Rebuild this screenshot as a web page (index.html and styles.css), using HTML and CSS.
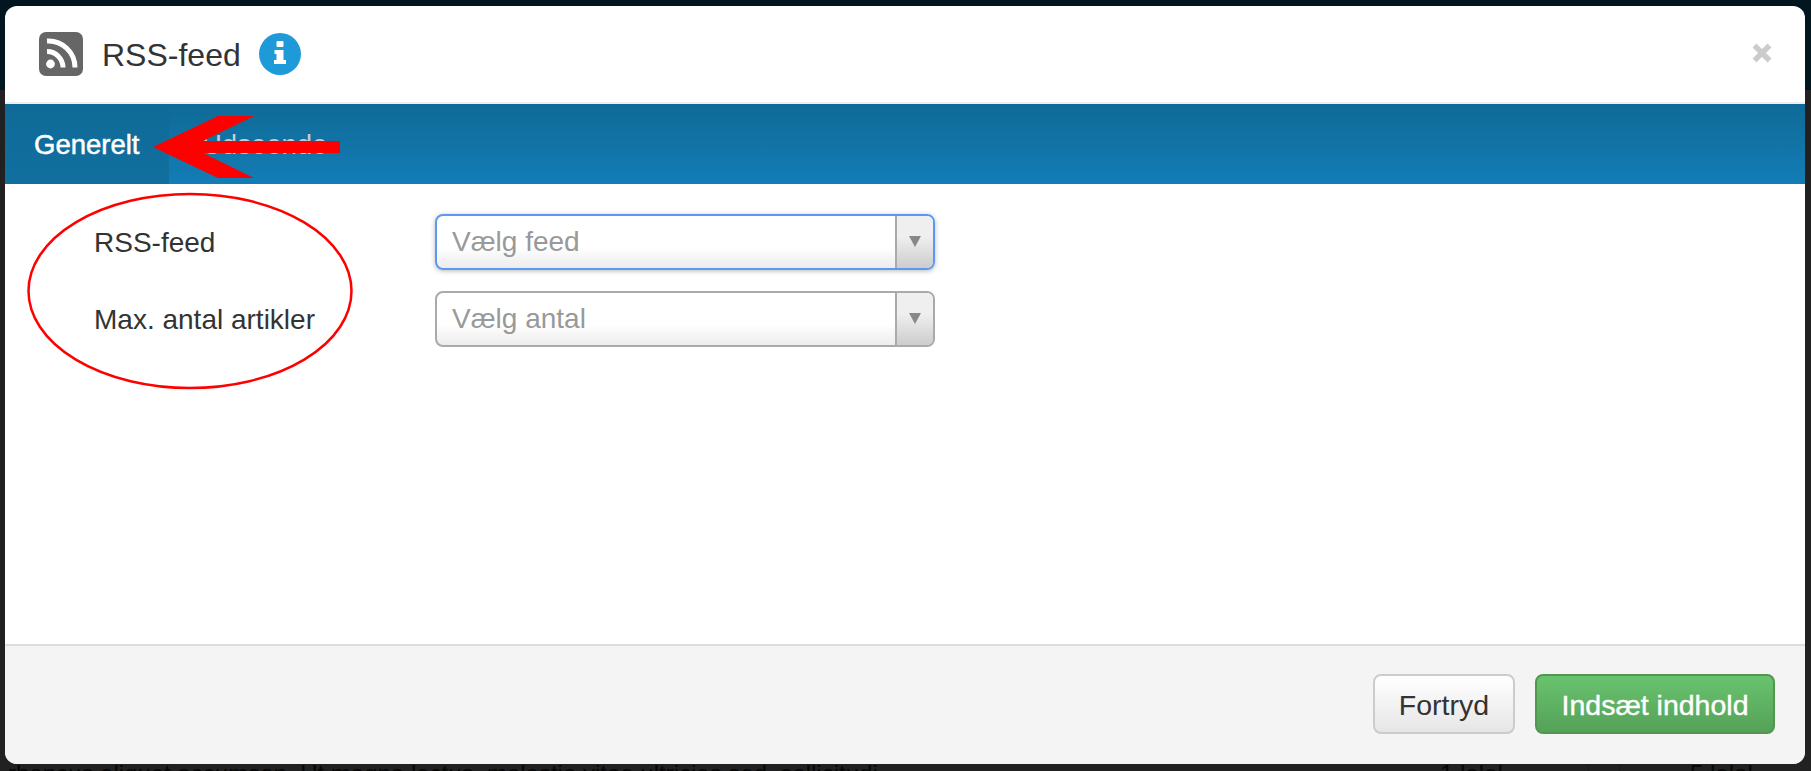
FILE: index.html
```html
<!DOCTYPE html>
<html lang="da">
<head>
<meta charset="utf-8">
<title>RSS-feed</title>
<link rel="stylesheet" href="styles.css">
</head>
<body>
<div class="page">
  <div class="page-nav"></div>
  <div class="page-main">
    <div class="page-row">
      <p class="page-text">rhoncus aliquet accumsan. Ut magna lectus, molestie vitae ultricies sed, sollicitudi</p>
      <span class="page-col">1 lolol</span>
      <span class="page-col page-col-narrow"></span>
      <span class="page-col page-col-last">5 lolol</span>
    </div>
  </div>
</div>

<div class="modal">
  <header class="modal-header">
    <svg class="rss-icon" viewBox="0 0 44 44" aria-hidden="true">
      <rect width="44" height="44" rx="7" fill="#666"/>
      <circle cx="11.5" cy="32" r="4.4" fill="#fff"/>
      <path d="M8 19.5a16 16 0 0 1 16 16" fill="none" stroke="#fff" stroke-width="5"/>
      <path d="M8 9a26.500 26.500 0 0 1 28 26.500" fill="none" stroke="#fff" stroke-width="5"/>
    </svg>
    <h1 class="modal-title">RSS-feed</h1>
    <svg class="info-icon" viewBox="0 0 42 42" aria-hidden="true">
      <circle cx="21" cy="21" r="21" fill="#1e9ad9"/>
      <rect x="17.500" y="8" width="7" height="6" rx="1" fill="#fff"/>
      <path d="M15.500 17h9v10h2.500v4h-12v-4h2.500v-6h-2z" fill="#fff"/>
    </svg>
    <button class="close" aria-label="Luk">
      <svg viewBox="0 0 20 20" aria-hidden="true"><path d="M2.500 2.500l15 15M17.500 2.500l-15 15" stroke="#ccc" stroke-width="5.500" fill="none"/></svg>
    </button>
  </header>

  <nav class="tabs">
    <a class="tab tab-active">Generelt</a>
    <a class="tab">Udseende</a>
  </nav>

  <form class="modal-body">
    <label class="field-label">RSS-feed</label>
    <div class="select select-focus">
      <span class="select-value">Vælg feed</span>
      <span class="select-arrow"><i class="caret"></i></span>
    </div>
    <label class="field-label">Max. antal artikler</label>
    <div class="select">
      <span class="select-value">Vælg antal</span>
      <span class="select-arrow"><i class="caret"></i></span>
    </div>
  </form>

  <footer class="modal-footer">
    <button class="btn btn-default">Fortryd</button>
    <button class="btn btn-success">Indsæt indhold</button>
  </footer>
</div>

<svg class="annotations" viewBox="0 0 1811 771" aria-hidden="true">
  <polygon points="153,147 218,116 254,116 203,141 340,141 340,153 203,153 254,178 218,178" fill="#ff0000"/>
  <ellipse cx="190" cy="291" rx="161.500" ry="97" fill="none" stroke="#ff0000" stroke-width="2.500"/>
</svg>
</body>
</html>
```
FILE: styles.css
```css
* { box-sizing: border-box; }

html, body {
  margin: 0;
  height: 100%;
  overflow: hidden;
}

body {
  position: relative;
  background: #222;
  font-family: "Liberation Sans", Arial, sans-serif;
  font-size: 28px;
  color: #333;
}

/* Page dimmed behind the dialog */
.page {
  height: 771px;
  display: flex;
  flex-direction: column;
  overflow: hidden;
}

.page-nav {
  height: 90px;
  flex: none;
  background: #02161f;
}

.page-main {
  flex: 1;
  display: flex;
  flex-direction: column;
  justify-content: flex-end;
  background: #212121;
  color: #070707;
}

.page-row {
  display: grid;
  grid-template-columns: 1440px 148px 32px 1fr;
  height: 30px;
  margin-bottom: -18px;
  font-size: 24px;
  line-height: 30px;
  white-space: nowrap;
}

.page-text {
  margin: 0;
  padding-left: 8px;
}

.page-col-narrow {
  border-left: 1px solid #1a1a1a;
  border-right: 1px solid #1a1a1a;
}

.page-col-last {
  padding-left: 70px;
}

/* Dialog */
.modal {
  position: absolute;
  left: 5px;
  top: 6px;
  width: 1800px;
  height: 758px;
  display: flex;
  flex-direction: column;
  background: #fff;
  border-radius: 12px;
  overflow: hidden;
}

.modal-header {
  height: 98px;
  flex: none;
  display: flex;
  align-items: center;
  padding: 0 24px 0 34px;
  border-bottom: 2px solid #eee;
}

.rss-icon {
  width: 44px;
  height: 44px;
  flex: none;
}

.modal-title {
  margin: 2px 0 0 19px;
  font-size: 32px;
  font-weight: normal;
  line-height: 40px;
  color: #333;
}

.info-icon {
  width: 42px;
  height: 42px;
  flex: none;
  margin: 0 0 0 18px;
}

.close {
  margin: -2px 9px 0 auto;
  padding: 0;
  width: 20px;
  height: 20px;
  border: 0;
  background: none;
}

.close svg {
  display: block;
  width: 20px;
  height: 20px;
}

.tabs {
  height: 80px;
  flex: none;
  display: flex;
  background: linear-gradient(#0f6a97, #137db6);
  font-size: 27.500px;
}

.tab {
  display: flex;
  align-items: center;
  padding: 2px 30px 0 33px;
  color: #ccc;
}

.tab-active {
  width: 164px;
  padding: 2px 0 0 29px;
  background: linear-gradient(#0f6a97, #116f9f);
  color: #fff;
  -webkit-text-stroke: 0.5px #fff;
}

.modal-body {
  flex: 1;
  display: grid;
  grid-template-columns: 341px 500px;
  grid-auto-rows: 56px;
  row-gap: 21px;
  align-content: start;
  align-items: center;
  padding: 30px 0 0 89px;
}

.field-label {
  padding-top: 2px;
  color: #333;
}

.select {
  height: 56px;
  display: flex;
  border: 2px solid #aaa;
  border-radius: 8px;
  background: linear-gradient(#fff 60%, #ececec);
  overflow: hidden;
}

.select-focus {
  border-color: #5b98f2;
  box-shadow: 0 1px 5px rgba(0, 0, 0, 0.28);
}

.select-value {
  flex: 1;
  padding: 2px 0 0 15px;
  line-height: 48px;
  color: #999;
}

.select-arrow {
  width: 38px;
  flex: none;
  display: flex;
  align-items: center;
  justify-content: center;
  padding-bottom: 2px;
  border-left: 2px solid #aaa;
  background: linear-gradient(#efefef 40%, #ccc);
}

.caret {
  width: 0;
  height: 0;
  border-left: 6px solid transparent;
  border-right: 6px solid transparent;
  border-top: 11px solid #888;
}

.modal-footer {
  height: 120px;
  flex: none;
  display: flex;
  justify-content: flex-end;
  align-items: flex-start;
  gap: 20px;
  padding: 28px 30px 0 0;
  background: #f4f4f4;
  border-top: 2px solid #ddd;
}

.btn {
  height: 60px;
  padding: 2px 0 0;
  border-radius: 8px;
  font: inherit;
  font-size: 28.500px;
}

.btn-default {
  width: 142px;
  border: 2px solid #ccc;
  background: linear-gradient(#fff, #e6e6e6);
  color: #333;
}

.btn-success {
  width: 240px;
  border: 2px solid #51984f;
  background: linear-gradient(#69c36e, #55a159);
  color: #fff;
  -webkit-text-stroke: 0.4px #fff;
}

/* Red markup drawn on top of the screenshot */
.annotations {
  position: absolute;
  left: 0;
  top: 0;
  width: 1811px;
  height: 771px;
  pointer-events: none;
}
```
